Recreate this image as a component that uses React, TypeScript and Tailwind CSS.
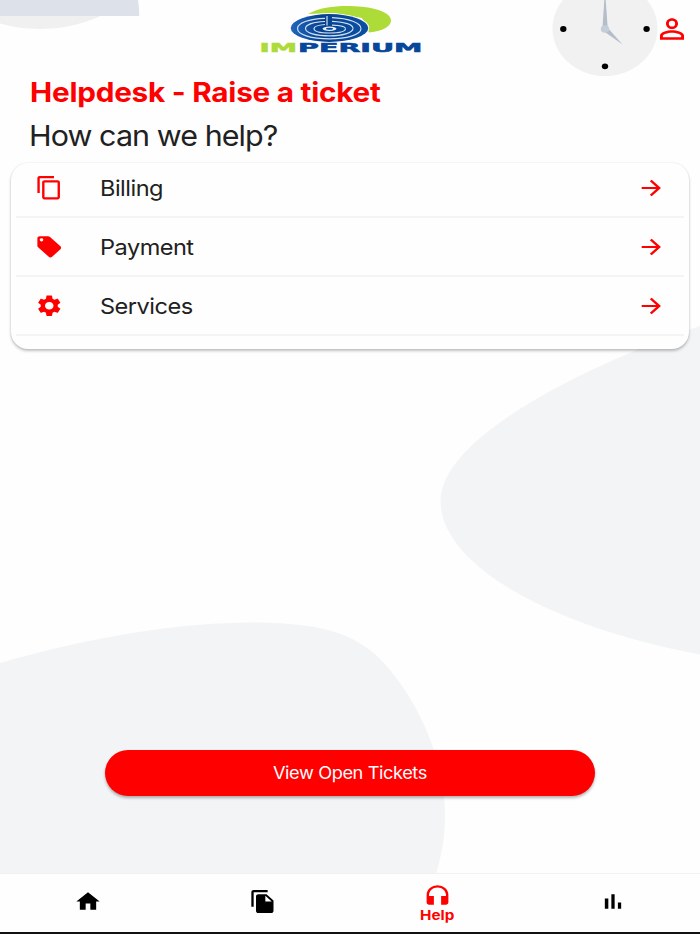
import type { SVGProps } from 'react'
import { MdContentCopy, MdFileCopy, MdHeadphones, MdHome, MdLocalOffer, MdPermIdentity, MdSettings } from 'react-icons/md'

type Icon = (props: SVGProps<SVGSVGElement>) => React.ReactNode

function ArrowIcon(props: SVGProps<SVGSVGElement>) {
  return (
    <svg viewBox="0 0 24 24" fill="none" stroke="currentColor" strokeWidth="2.200" {...props}>
      <path d="M4 12H18.600M11.800 4.400L19 12L11.800 19.600" />
    </svg>
  )
}

function BarsIcon(props: SVGProps<SVGSVGElement>) {
  return (
    <svg viewBox="0 0 24 24" fill="currentColor" {...props}>
      <path d="M5 9.200h3V19H5zM10.600 5h2.800v14h-2.800zm5.600 8H19v6h-2.800z" />
    </svg>
  )
}

const topics: { label: string; icon: Icon }[] = [
  { label: 'Billing', icon: MdContentCopy as Icon },
  { label: 'Payment', icon: MdLocalOffer as Icon },
  { label: 'Services', icon: MdSettings as Icon },
]

const tabs: { label: string; icon: Icon; active?: boolean }[] = [
  { label: 'Home', icon: MdHome as Icon },
  { label: 'Documents', icon: MdFileCopy as Icon },
  { label: 'Help', icon: MdHeadphones as Icon, active: true },
  { label: 'Usage', icon: BarsIcon },
]

function Backdrop() {
  return (
    <svg className="absolute inset-0 h-full w-full" viewBox="0 0 700 934" aria-hidden="true">
      <ellipse cx="40" cy="-66" rx="120" ry="95" fill="#f0f0f0" />
      <path d="M0 0H138Q139.300 8 139.300 16H0z" fill="#dde1e9" />
      <path d="M700 326C590 364 440.500 436 440.500 501C440.500 568 560 629 700 654.500z" fill="#f3f4f6" />
      <path d="M0 663C90 637 180 622 256 622.500C322 623 356 634 382 661C422 704 445 765 445 815C445 840 441 856 436 874H0z" fill="#f3f4f6" />
      <ellipse cx="605" cy="28.500" rx="52.500" ry="47.500" fill="#f1f1f1" />
      <path d="M604.300 0h1.400l2 28h-5.200z" fill="#b4bdca" />
      <path d="M603.500 31l3.500-4L622.500 44.500z" fill="#b4bdca" />
      <ellipse cx="605" cy="29" rx="4.200" ry="3.800" fill="#c3ced8" />
      <g fill="#000">
        <ellipse cx="563.300" cy="29" rx="3.200" ry="2.900" />
        <ellipse cx="646.600" cy="29" rx="3.200" ry="2.900" />
        <ellipse cx="605" cy="66.300" rx="3.200" ry="2.900" />
      </g>
    </svg>
  )
}

function Logo() {
  return (
    <svg className="h-[60px] w-[180px]" viewBox="0 0 180 60" role="img" aria-label="Imperium">
      <defs>
        <linearGradient id="disc" x1="0" x2="1">
          <stop offset="0" stopColor="#2267bb" />
          <stop offset="0.400" stopColor="#07408f" />
          <stop offset="1" stopColor="#0d51a3" />
        </linearGradient>
      </defs>
      <path d="M58 14C70 7 88 5.500 104 6.200C127 7 141 13 141 20.500C141 26 134 31 119 32.500L112 18L84 13z" fill="#addb38" />
      <ellipse cx="79.500" cy="28" rx="39.800" ry="14.700" fill="#fff" />
      <ellipse cx="79.500" cy="28" rx="38.800" ry="13.900" fill="url(#disc)" />
      <g fill="none" stroke="#cfe2f5" strokeWidth="1.200">
        <path d="M75 18.300C59 18.800 47.500 23 47.500 28.500C47.500 35 62 38.800 79.500 38.800C96 38.800 111 35 111 28.500" />
        <path d="M75 21.500C64 22 55.500 24.500 55.500 28.500C55.500 33 66 35.900 79.500 35.900C92 35.900 103 33 103 28.500" />
        <path d="M75 24.500C69 25 64 26.300 64 28.500C64 31.500 70 33 79.500 33C89 33 95.500 31.500 95.500 28.500" />
        <path d="M77 16V25.500M82 25.200C90 25.500 95.500 26.500 95.500 28.500M82 21.300C95 22 103 24.500 103 28.500M82 17.600C99 18.200 111 23 111 28.500" />
      </g>
      <ellipse cx="79.500" cy="28.700" rx="7" ry="2.200" fill="#e6f1fa" />
      <ellipse cx="79.500" cy="28.700" rx="3.500" ry="1" fill="#0b4a9c" />
      <text y="52" fontFamily="DejaVu Sans" fontWeight="700" fontSize="11.500" strokeWidth="0.500">
        <tspan x="9.500" textLength="37.500" lengthAdjust="spacingAndGlyphs" fill="#addb38" stroke="#addb38">IM</tspan>
        <tspan x="48" textLength="124.500" lengthAdjust="spacingAndGlyphs" fill="#07479b" stroke="#07479b">PERIUM</tspan>
      </text>
    </svg>
  )
}

export default function App() {
  return (
    <div className="relative h-[934px] w-[700px] overflow-hidden bg-[#fefefe] font-['Inter',sans-serif] text-[#212121]">
      <Backdrop />

      <div className="relative flex h-full flex-col">
        <header className="flex h-[60px] items-start pl-[250px]">
          <Logo />
          <button className="mt-[13px] ml-[224px]" aria-label="Profile">
            <MdPermIdentity preserveAspectRatio="none" className="h-8 w-[36px] text-[#ff0000]" />
          </button>
        </header>

        <div className="h-[103px] pl-[29px]">
          <h1 className="mt-[13px] ml-[0.5px] w-max origin-left scale-x-110 text-[27px] leading-10 font-bold tracking-[-0.22px] text-[#ff0000]">
            Helpdesk - Raise a ticket
          </h1>
          <h2 className="mt-[3px] w-max origin-left scale-x-105 text-[29px] leading-10 tracking-[-0.88px]">How can we help?</h2>
        </div>

        <section className="mx-[11px] h-[186px] rounded-[17px] bg-[#fefefe] px-[5px] shadow-[0_2px_3px_rgba(0,0,0,0.24),0_0_2px_rgba(0,0,0,0.1)]">
          {topics.map(({ label, icon: Icon }) => (
            <button key={label} className="flex h-[58.8px] w-full items-center border-b-2 border-[#f4f4f4] pt-px pr-[19px] pl-[19px] first:h-[55px] first:pt-0 first:pb-[3px]">
              <Icon preserveAspectRatio="none" className="h-[25.5px] w-[28.5px] text-[#ff0000]" />
              <span className="ml-[36.4px] origin-left scale-x-107 pt-px text-[22px] tracking-[-0.47px]">{label}</span>
              <ArrowIcon preserveAspectRatio="none" className="ml-auto h-6 w-7 text-[#ff0000]" />
            </button>
          ))}
        </section>

        <button className="mx-[105px] mt-auto mb-[77px] flex h-[46px] shrink-0 items-center justify-center rounded-full bg-[#ff0000] pt-0.5 text-white shadow-[0_2px_3px_rgba(0,0,0,0.3)]">
          <span className="scale-x-107 text-[17px] tracking-[-0.38px]">View Open Tickets</span>
        </button>

        <nav className="flex h-[61px] shrink-0 border-t border-b-2 border-t-[#f0f1f3] border-b-[#111] bg-[#fefefe]">
          {tabs.map(({ label, icon: Icon, active }) =>
            active ? (
              <button key={label} className="flex flex-1 flex-col items-center pt-2 text-[#ff0000]">
                <Icon preserveAspectRatio="none" className="h-[26px] w-[29px]" />
                <span className="-mt-px scale-x-113 text-[13.5px] leading-4 font-bold">{label}</span>
              </button>
            ) : (
              <button key={label} aria-label={label} className="flex flex-1 items-center justify-center pb-[3px] text-black">
                <Icon preserveAspectRatio="none" className="h-[25px] w-[28px]" />
              </button>
            ),
          )}
        </nav>
      </div>
    </div>
  )
}
